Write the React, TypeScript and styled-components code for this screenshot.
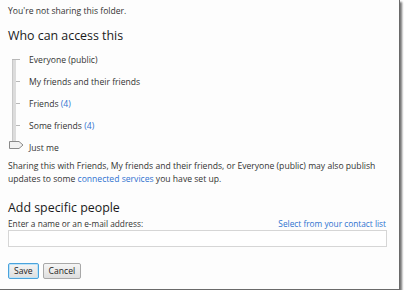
import React from 'react';
import styled, { createGlobalStyle } from 'styled-components';

const GlobalStyle = createGlobalStyle`
  html, body {
    margin: 0;
    padding: 0;
    background: #ffffff;
  }
  body {
    font-family: "Open Sans", "Noto Sans", sans-serif;
    color: #333;
  }
`;

const Panel = styled.div`
  width: 400px;
  height: 290px;
  box-sizing: border-box;
  background: #fdfdfd;
  border-right: 1px solid #6a6a6a;
  border-bottom: 1px solid #6a6a6a;
  box-shadow: 2px 2px 2px rgba(0, 0, 0, 0.55);
  padding: 5px 13px 0 8px;
  font-size: 8.6px;
  overflow: hidden;
`;

const Note = styled.div`
  line-height: 13px;
`;

const Heading = styled.h2`
  margin: 0;
  font-size: 12.4px;
  font-weight: 400;
  color: #1a1a1a;
  line-height: 16px;
`;

const SliderBlock = styled.div`
  display: flex;
  gap: 6px;
  margin: 12px 0 0 1px;
`;

const Track = styled.div`
  position: relative;
  width: 14px;
  height: 93px;
`;

const Rail = styled.div`
  position: absolute;
  left: 3px;
  top: 3px;
  width: 3px;
  height: 88px;
  background: #dcdcdc;
  border-left: 1px solid #c8c8c8;
`;

const Tick = styled.div<{ $y: number; $first?: boolean }>`
  position: absolute;
  left: ${(p) => (p.$first ? 3 : 7)}px;
  top: ${(p) => p.$y}px;
  width: ${(p) => (p.$first ? 8 : 4)}px;
  height: 1px;
  background: #b8b8b8;
`;

const Thumb = styled.svg`
  position: absolute;
  left: 0;
  top: 85px;
`;

const Options = styled.ul`
  list-style: none;
  margin: 0;
  padding: 0;
  display: flex;
  flex-direction: column;
`;

const Option = styled.li`
  height: 22px;
  line-height: 8px;
  &:last-child {
    height: 8px;
  }
`;

const Count = styled.span`
  color: #2f72d0;
`;

const Link = styled.a`
  color: #2f72d0;
  text-decoration: none;
`;

const Paragraph = styled.p`
  margin: 8px 0 0 0;
  line-height: 13px;
`;

const Section = styled.div`
  margin-top: 14px;
`;

const LabelRow = styled.div`
  display: flex;
  justify-content: space-between;
  margin-top: 1px;
  line-height: 13px;
  font-size: 8.3px;
`;

const Field = styled.input`
  display: block;
  box-sizing: border-box;
  width: 379px;
  height: 17px;
  margin: 0;
  border: 1px solid #d6d6d6;
  background: #fff;
  outline: none;
`;

const Actions = styled.div`
  display: flex;
  gap: 4px;
  margin-top: 16px;
`;

const Button = styled.button<{ $focused?: boolean }>`
  font-family: "Open Sans", "Noto Sans", sans-serif;
  font-size: 8.6px;
  color: #222;
  height: 16px;
  padding: 0 5px;
  border-radius: 2px;
  border: 1px solid ${(p) => (p.$focused ? '#4aa3dd' : '#a8a8a8')};
  box-shadow: ${(p) => (p.$focused ? 'inset 0 0 0 1px #bfe3f7' : 'none')};
  background: linear-gradient(#f5f5f5, #dedede);
  line-height: 12px;
`;

const levels = [
  { label: 'Everyone (public)' },
  { label: 'My friends and their friends' },
  { label: 'Friends', count: 4 },
  { label: 'Some friends', count: 4 },
  { label: 'Just me' },
];

const App: React.FC = () => {
  return (
    <>
      <GlobalStyle />
      <Panel>
        <Note>You're not sharing this folder.</Note>
        <Heading style={{ marginTop: 10 }}>Who can access this</Heading>
        <SliderBlock>
          <Track>
            <Rail />
            {[0, 22, 44, 66].map((y, i) => (
              <Tick key={y} $y={y + 3} $first={i === 0} />
            ))}
            <Thumb width="15" height="8" viewBox="0 0 15 8">
              <path d="M0.5 0.5 H10 L14 4 L10 7.5 H0.5 Z" fill="#f2f2f2" stroke="#8a8a8a" />
            </Thumb>
          </Track>
          <Options>
            {levels.map((l) => (
              <Option key={l.label}>
                {l.label}
                {l.count !== undefined && (
                  <>
                    {' '}
                    <Count>({l.count})</Count>
                  </>
                )}
              </Option>
            ))}
          </Options>
        </SliderBlock>
        <Paragraph>
          Sharing this with Friends, My friends and their friends, or Everyone (public) may also publish
          updates to some <Link href="#">connected services</Link> you have set up.
        </Paragraph>
        <Section>
          <Heading>Add specific people</Heading>
          <LabelRow>
            <span>Enter a name or an e-mail address:</span>
            <Link href="#">Select from your contact list</Link>
          </LabelRow>
          <Field type="text" />
        </Section>
        <Actions>
          <Button $focused>Save</Button>
          <Button>Cancel</Button>
        </Actions>
      </Panel>
    </>
  );
};

export default App;
